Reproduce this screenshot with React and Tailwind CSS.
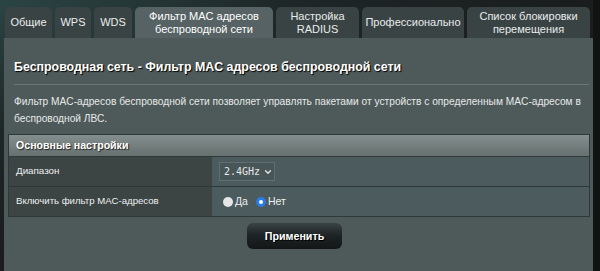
import { ChevronDown } from 'lucide-react';

const tabs = [
  { label: 'Общие', w: 'w-[47px]' },
  { label: 'WPS', w: 'w-[36px]' },
  { label: 'WDS', w: 'w-[38px]' },
  { label: 'Фильтр MAC адресов беспроводной сети', w: 'w-[138px]', active: true },
  { label: 'Настройка RADIUS', w: 'w-[83px]' },
  { label: 'Профессионально', w: 'w-[102px]' },
  { label: 'Список блокировки перемещения', w: 'w-[123px]' },
];

export default function App() {
  return (
    <div className="w-[600px] h-[271px] overflow-hidden flex bg-[#1b1e1f] bg-[radial-gradient(ellipse_at_0%_0%,#2b4444_0%,#1e2627_35%,#1a1c1d_70%)] font-['Liberation_Sans',Arial,sans-serif]">
      <div className="w-[589px] ml-[4px] flex flex-col">
        {/* Tabs */}
        <div className="flex items-end gap-[3px] h-[38px] pl-[1px]">
          {tabs.map((t) => (
            <div
              key={t.label}
              className={`${t.w} h-[31px] shrink-0 rounded-t-[5px] flex items-center justify-center text-center leading-[13px] text-[11px] px-[6px] ${
                t.active ? 'bg-[#566263] text-white' : 'bg-[#3a4344] text-[#e8ecec]'
              }`}
            >
              {t.label}
            </div>
          ))}
        </div>

        {/* Panel */}
        <div className="flex-1 bg-[#4e5959] px-[4px] pt-[22px]">
          <div className="px-[6px] text-[12.4px] font-bold text-white [text-shadow:1px_1px_1px_#000] leading-[15px]">
            Беспроводная сеть - Фильтр MAC адресов беспроводной сети
          </div>
          <div className="mx-[6px] mt-[9px] h-px bg-[#6b7676] w-[575px]" />
          <div className="px-[6px] mt-[8px] text-[10.2px] leading-[17px] text-[#e6e9e9] w-[585px]">
            Фильтр MAC-адресов беспроводной сети позволяет управлять пакетами от устройств с определенным MAC&#8209;адресом в беспроводной ЛВС.
          </div>

          {/* Table */}
          <div className="mt-[7px] border border-[#2f3738] w-[582px]">
            <div className="h-[21px] flex items-center pl-[7px] bg-gradient-to-b from-[#838e8e] to-[#66706f] text-[10.6px] font-bold text-white [text-shadow:1px_1px_1px_#222]">
              Основные настройки
            </div>
            <div className="flex h-[30px] border-t border-[#2f3738]">
              <div className="w-[203px] bg-[#3c4444] flex items-center pl-[7px] text-[9.8px] text-[#eef0f0]">
                Диапазон
              </div>
              <div className="flex-1 bg-[#4b5b5e] flex items-center pl-[7px]">
                <div className="h-[19px] w-[56px] border border-[#5f6e70] bg-[#485658] flex items-center pl-[4px] gap-[3px] text-[10px] text-[#e4e8e8] font-['DejaVu_Sans_Mono',monospace]">
                  2.4GHz
                  <ChevronDown size={10} strokeWidth={3} className="text-[#e4e8e8]" />
                </div>
              </div>
            </div>
            <div className="flex h-[30px] border-t border-[#2f3738]">
              <div className="w-[203px] bg-[#3c4444] flex items-center pl-[7px] text-[9.6px] text-[#eef0f0]">
                Включить фильтр MAC-адресов
              </div>
              <div className="flex-1 bg-[#4b5b5e] flex items-center pl-[11px] text-[10.5px] text-[#eef0f0]">
                <span className="w-[10px] h-[10px] rounded-full bg-[#e6e6e6] mr-[2px]" />
                <span className="mr-[8px]">Да</span>
                <span className="w-[10px] h-[10px] rounded-full bg-white border-[3px] border-[#2a7be4] mr-[2px]" />
                <span>Нет</span>
              </div>
            </div>
          </div>

          <div className="flex justify-center mt-[6px] pr-[8px]">
            <button className="w-[95px] h-[26px] rounded-[6px] bg-gradient-to-b from-[#3a4344] via-[#1d2223] to-[#131718] text-white text-[10.7px] font-bold [text-shadow:1px_1px_0_#000]">
              Применить
            </button>
          </div>
        </div>
      </div>
      <div className="flex-1 bg-[#111313]" />
    </div>
  );
}
